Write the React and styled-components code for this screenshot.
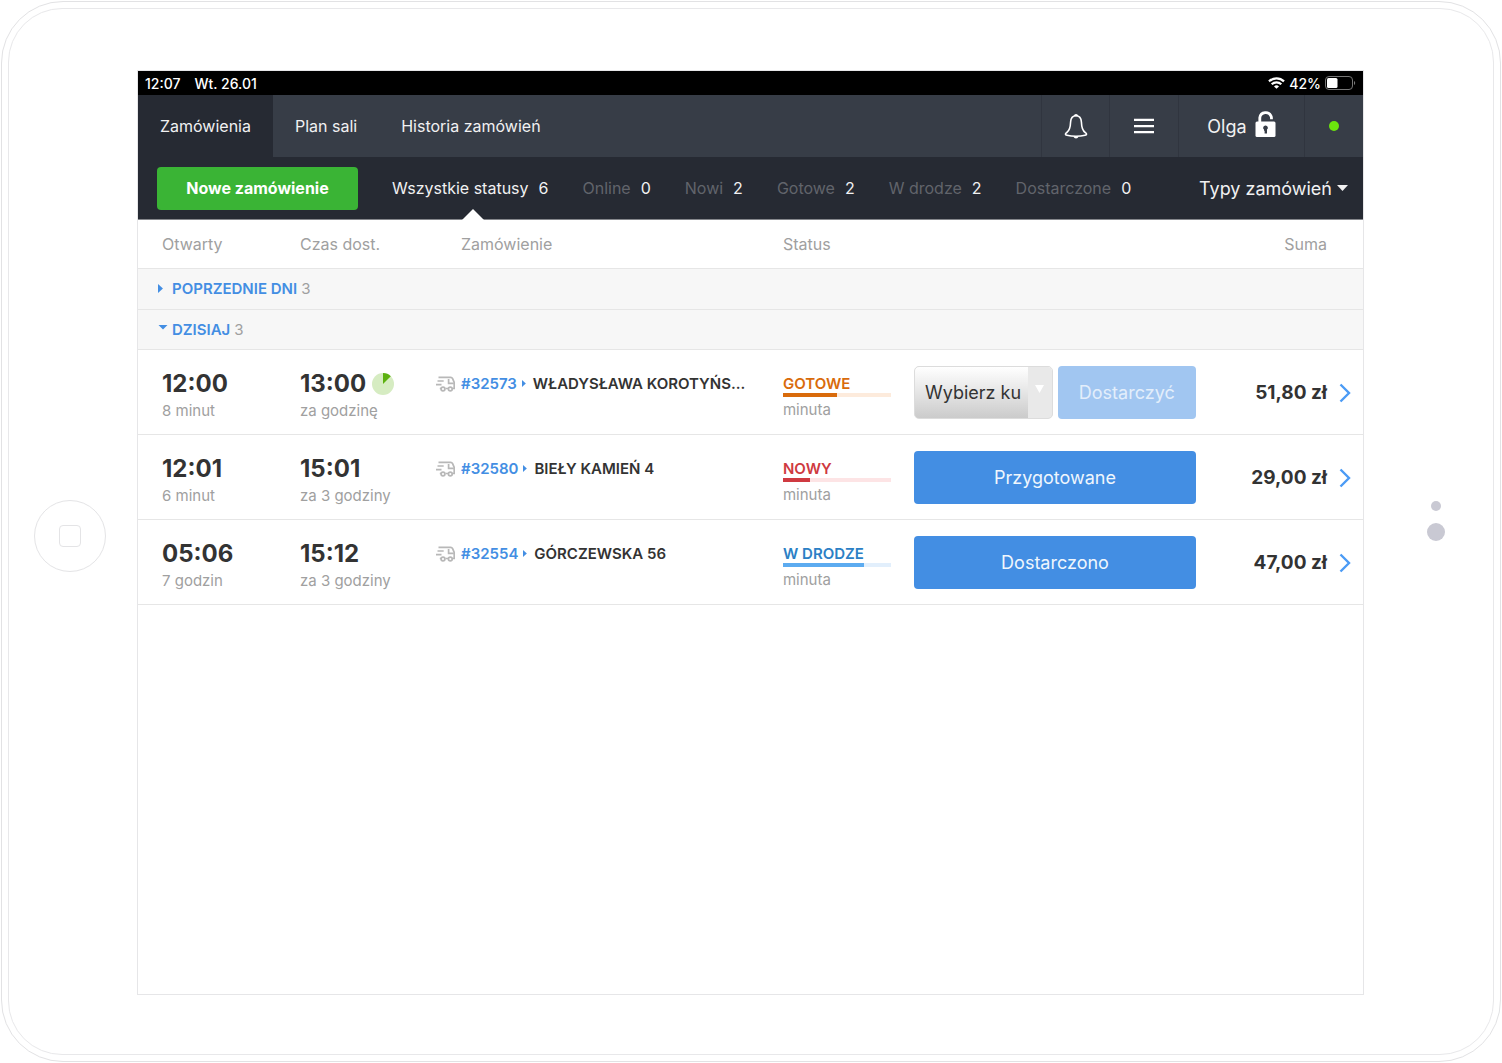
import React, { useState } from 'react';
import styled, { createGlobalStyle } from 'styled-components';

const GlobalStyle = createGlobalStyle`
  *, *::before, *::after {
    box-sizing: border-box;
  }
  body {
    margin: 0;
    background: #fff;
    color: #333;
    font-family: Inter, "Liberation Sans", sans-serif;
    font-size: 16px;
  }
  button, select {
    font: inherit;
    color: inherit;
    cursor: pointer;
  }
  button {
    margin: 0;
    padding: 0;
    border: 0;
    background: none;
  }
`;

const Page = styled.div`
  display: flex;
  min-height: 100vh;
  padding: 1px;
`;

const Device = styled.div`
  flex: 1;
  display: flex;
  padding: 6px;
  border: 1px solid #e2e2e4;
  border-radius: 62px;
`;

const Bezel = styled.div`
  flex: 1;
  display: grid;
  grid-template-columns: 128px minmax(0, 1fr) 129px;
  align-items: center;
  padding: 61px 0 59px;
  border: 1px solid #e8e8ea;
  border-radius: 54px;
`;

const HomeButton = styled.div`
  display: grid;
  place-items: center;
  width: 72px;
  height: 72px;
  margin: 6px 0 0 25px;
  border: 1px solid #e4e4e6;
  border-radius: 50%;

  &::before {
    content: '';
    width: 22px;
    height: 22px;
    border: 1px solid #e4e4e6;
    border-radius: 4px;
  }
`;

const Camera = styled.div`
  display: flex;
  flex-direction: column;
  align-items: center;
  gap: 12px;
  padding: 0 0 24px 14px;
`;

const Lens = styled.span`
  width: ${({ $size }) => $size}px;
  height: ${({ $size }) => $size}px;
  border-radius: 50%;
  background: #c9c9d3;
`;

const Screen = styled.main`
  align-self: stretch;
  border: 1px solid #e6e6e8;
`;

const StatusBar = styled.div`
  display: flex;
  align-items: center;
  gap: 14px;
  height: 24px;
  padding: 0 7px;
  background: #000;
  color: #fff;
  font-size: 14px;
  font-weight: 500;
`;

const StatusIcons = styled.div`
  display: flex;
  align-items: center;
  gap: 4px;
  margin-left: auto;
`;

const TopBar = styled.header`
  display: flex;
  height: 62px;
  background: #373d47;
  color: #f1f1f2;
`;

const Tabs = styled.nav`
  display: flex;
  flex: 1;
`;

const Tab = styled.a`
  display: flex;
  align-items: center;
  padding: 0 22px;
  background: ${({ $active }) => ($active ? '#262a33' : 'transparent')};
  color: inherit;
  text-decoration: none;
`;

const Tools = styled.div`
  display: flex;
`;

const Tool = styled.button`
  display: flex;
  align-items: center;
  justify-content: center;
  gap: 8px;
  width: ${({ $width }) => $width}px;
  border-left: 1px solid #30353f;
  font-size: 18px;
`;

const OnlineDot = styled.span`
  width: 10px;
  height: 10px;
  border-radius: 50%;
  background: #6ce60e;
`;

const FilterBar = styled.div`
  display: flex;
  align-items: center;
  height: 63px;
  padding: 0 15px 0 19px;
  border-bottom: 1px solid #85878c;
  background: #262a33;
  color: #f1f1f2;
`;

const NewOrder = styled.button`
  width: 201px;
  height: 43px;
  border-radius: 4px;
  background: #3ab435;
  color: #fff;
  font-weight: 700;
`;

const Filters = styled.div`
  display: flex;
  align-self: stretch;
  gap: 34px;
  margin-left: 34px;
`;

const Filter = styled.button`
  position: relative;
  display: flex;
  align-items: center;
  gap: 10px;
  color: ${({ $active }) => ($active ? '#f1f1f2' : '#61646b')};

  &::after {
    content: '';
    display: ${({ $active }) => ($active ? 'block' : 'none')};
    position: absolute;
    bottom: -1px;
    left: 70px;
    border: 11px solid transparent;
    border-top: 0;
    border-bottom-color: #fff;
  }
`;

const Count = styled.span`
  color: #f1f1f2;
`;

const TypeMenu = styled.button`
  display: flex;
  align-items: center;
  gap: 5px;
  margin-left: auto;
  font-size: 18px;
`;

const Table = styled.table`
  width: 100%;
  border-collapse: collapse;
  table-layout: fixed;
`;

const Col = styled.col`
  width: ${({ $width }) => ($width ? `${$width}px` : 'auto')};
`;

const Heading = styled.th`
  height: 48px;
  padding: 0 0 0 ${({ $indent }) => $indent || 0}px;
  border-bottom: 1px solid #e6e6e6;
  color: #a0a0a0;
  font-weight: 400;
  text-align: ${({ $align }) => $align || 'left'};
`;

const GroupCell = styled.td`
  height: ${({ $height }) => $height || 41}px;
  padding: 0 20px;
  border-bottom: 1px solid #e6e6e6;
  background: #f7f7f7;
`;

const GroupToggle = styled.button`
  display: flex;
  align-items: center;
  gap: 4px;
  color: #a0a0a0;
  font-size: 15px;

  svg {
    width: 10px;
  }
`;

const GroupName = styled.span`
  color: #438ee3;
  font-weight: 600;
`;

const Cell = styled.td`
  height: 85px;
  padding: 19px 0 0 ${({ $indent }) => $indent || 0}px;
  border-bottom: 1px solid #e6e6e6;
  vertical-align: top;
`;

const MiddleCell = styled(Cell)`
  padding-top: 2px;
  vertical-align: middle;
  text-align: right;
`;

const Time = styled.div`
  display: flex;
  align-items: center;
  gap: 6px;
  color: #333;
  font-size: 24px;
  font-weight: 700;
  line-height: 30px;
`;

const Muted = styled.div`
  color: #a0a0a0;
  font-size: 15px;
  line-height: 24px;
`;

const Order = styled.div`
  display: flex;
  align-items: center;
  gap: 6px;
  height: 30px;
  font-size: 15px;
  font-weight: 600;

  svg {
    flex: none;
  }
`;

const OrderLink = styled.a`
  display: flex;
  align-items: center;
  gap: 5px;
  color: #438ee3;
  text-decoration: none;
`;

const Address = styled.span`
  white-space: nowrap;
`;

const StatusName = styled.div`
  height: 24px;
  color: ${({ $color }) => $color};
  font-size: 15px;
  font-weight: 600;
  line-height: 30px;
`;

const Track = styled.div`
  width: 108px;
  height: 4px;
  margin-bottom: 1px;
  background: ${({ $color }) => $color};
`;

const Bar = styled.div`
  height: 100%;
  background: ${({ $color }) => $color};
`;

const Actions = styled.div`
  display: flex;
  gap: 5px;
`;

const Action = styled.button`
  flex: 1;
  height: 53px;
  border-radius: 4px;
  background: ${({ disabled }) => (disabled ? '#a1c6f1' : '#438ee3')};
  color: ${({ disabled }) => (disabled ? '#e3eefb' : '#eff6fd')};
  font-size: 18px;
`;

const SelectBox = styled.div`
  position: relative;
  flex: 1;
`;

const CourierSelect = styled.select`
  width: 100%;
  height: 53px;
  padding: 0 26px 0 10px;
  border: 1px solid #dcdcdc;
  border-radius: 5px;
  appearance: none;
  background: linear-gradient(#fff, #cbcbcb);
  color: #333;
  font-size: 18px;
`;

const SelectArrow = styled.span`
  position: absolute;
  top: 1px;
  right: 1px;
  bottom: 1px;
  display: flex;
  justify-content: center;
  width: 24px;
  padding-top: 18px;
  border-radius: 0 4px 4px 0;
  background: #e9e9e9;
  pointer-events: none;
`;

const Sum = styled.span`
  font-size: 19px;
  font-weight: 700;
`;

const OpenOrder = styled.button`
  display: block;
  margin: 0 12px 0 auto;

  svg {
    display: block;
  }
`;

const WifiIcon = () => (
  <svg width="17" height="12" viewBox="0 0 17 12" fill="none" stroke="#fff" strokeWidth="2.2">
    <path d="M1 4.4a10.7 10.7 0 0 1 15 0" />
    <path d="M3.7 7.3a6.9 6.9 0 0 1 9.6 0" />
    <path d="M8.5 11.8 6 9.4a3.6 3.6 0 0 1 5 0z" fill="#fff" stroke="none" />
  </svg>
);

const BatteryIcon = () => (
  <svg width="31" height="14" viewBox="0 0 31 14">
    <rect x="0.5" y="0.5" width="27" height="13" rx="3.5" fill="none" stroke="#777" />
    <rect x="2" y="2" width="10.5" height="10" rx="1.5" fill="#fff" />
    <path d="M29 5v4c1.6-.6 1.6-3.4 0-4z" fill="#777" />
  </svg>
);

const BellIcon = () => (
  <svg width="24" height="26" viewBox="0 0 24 26" fill="none" stroke="#fff" strokeWidth="1.6">
    <path d="M12 2.700C8.200 2.700 6.800 5.300 6.600 9c-.2 5.200-.9 8.600-3.800 10.500-1.900 1.200-1.800 2.300.2 2.800 2.600.6 5.700.9 9 .9s6.400-.3 9-.9c2-.5 2.100-1.600.2-2.800-2.900-1.900-3.600-5.300-3.800-10.500-.2-3.700-1.600-6.300-5.400-6.300z" />
    <path d="M9.900 3.200C9.900.2 14.100.2 14.100 3.200z" fill="#fff" stroke="none" />
    <path d="M9.500 23.200h5c-.5 3-4.500 3-5 0z" fill="#fff" stroke="none" />
  </svg>
);

const MenuIcon = () => (
  <svg width="20" height="16" viewBox="0 0 20 16" fill="#fff">
    <path d="M0 .8h20V3H0zM0 7h20v2.200H0zM0 13h20v2.200H0z" />
  </svg>
);

const UnlockIcon = () => (
  <svg width="21" height="32" viewBox="0 0 21 32">
    <path d="M4.800 13V7.700a5.900 5.900 0 0 1 11.400-1.200c.3.800.3 1.600.3 2.700" fill="none" stroke="#fff" strokeWidth="2.8" />
    <rect x="0.5" y="11.500" width="20" height="15.5" rx="1.5" fill="#fff" />
    <path d="M10.500 15.500a2.300 2.300 0 0 1 1.500 4.100v3.800H9.600v-2.600H9v-1.200a2.300 2.300 0 0 1 1.500-4.100z" fill="#373d47" />
  </svg>
);

const CaretIcon = ({ width = 11, height = 6, color = 'currentColor' }) => (
  <svg width={width} height={height} viewBox="0 0 10 6" preserveAspectRatio="none" fill={color}>
    <path d="M0 0h10L5 6z" />
  </svg>
);

const OpenCaretIcon = () => (
  <svg width="10" height="10" viewBox="0 0 10 10" fill="#438ee3">
    <path d="M.5 1h9L5 5.500z" />
  </svg>
);

const RightCaretIcon = ({ size = 9 }) => (
  <svg width={size * 0.7} height={size} viewBox="0 0 6 10" preserveAspectRatio="xMinYMid" fill="#438ee3">
    <path d="M0 0v10l5.500-5z" />
  </svg>
);

const PieIcon = () => (
  <svg width="22" height="22" viewBox="0 0 22 22">
    <circle cx="11" cy="11" r="11" fill="#d6ecc2" />
    <path d="M11 11V0a11 11 0 0 1 7.800 3.200z" fill="#5cb110" />
  </svg>
);

const TruckIcon = () => (
  <svg width="19" height="16" viewBox="0 0 19 16" fill="none" stroke="#b8b8b8" strokeWidth="1.7">
    <path d="M2.500 1.300h12.300c.8 0 1.300.4 1.700 1.100l1.700 3.900v6.200h-1.700M12 12.500H9.500M5 12.500H3.800M1.500 5h6.200M0 8.700h5.500" />
    <path d="M12.600 3v4.300h5.200" />
    <circle cx="7" cy="13" r="1.900" />
    <circle cx="14.300" cy="13" r="1.900" />
  </svg>
);

const ChevronIcon = () => (
  <svg width="12" height="20" viewBox="0 0 12 20" fill="none" stroke="#4b9bf5" strokeWidth="2.4">
    <path d="M1.500 1.500 10 10l-8.500 8.500" />
  </svg>
);

const filters = [
  { name: 'Wszystkie statusy', count: 6 },
  { name: 'Online', count: 0 },
  { name: 'Nowi', count: 2 },
  { name: 'Gotowe', count: 2 },
  { name: 'W drodze', count: 2 },
  { name: 'Dostarczone', count: 0 },
];

const statuses = {
  ready: { name: 'GOTOWE', color: '#d96b0b', track: '#fdebdc', progress: 50 },
  fresh: { name: 'NOWY', color: '#cf3a41', track: '#fde4e5', progress: 25 },
  onWay: { name: 'W DRODZE', color: '#2b80c5', bar: '#5cabf0', track: '#e2effc', progress: 75 },
};

const orders = [
  {
    id: '#32573', opened: '12:00', ago: '8 minut', due: '13:00', left: 'za godzinę', pie: true, address: 'WŁADYSŁAWA KOROTYŃS...', status: 'ready', sum: '51,80 zł',
  },
  {
    id: '#32580', opened: '12:01', ago: '6 minut', due: '15:01', left: 'za 3 godziny', address: 'BIEŁY KAMIEŃ 4', status: 'fresh', action: 'Przygotowane', sum: '29,00 zł',
  },
  {
    id: '#32554', opened: '05:06', ago: '7 godzin', due: '15:12', left: 'za 3 godziny', address: 'GÓRCZEWSKA 56', status: 'onWay', action: 'Dostarczono', sum: '47,00 zł',
  },
];

const OrderRow = ({ order }) => {
  const status = statuses[order.status];
  return (
    <tr>
      <Cell $indent={24}>
        <Time>{order.opened}</Time>
        <Muted>{order.ago}</Muted>
      </Cell>
      <Cell>
        <Time>
          {order.due}
          {order.pie && <PieIcon />}
        </Time>
        <Muted>{order.left}</Muted>
      </Cell>
      <Cell>
        <Order>
          <TruckIcon />
          <OrderLink href={order.id}>
            {order.id}
            <RightCaretIcon size={7} />
          </OrderLink>
          <Address>{order.address}</Address>
        </Order>
      </Cell>
      <Cell>
        <StatusName $color={status.color}>{status.name}</StatusName>
        <Track $color={status.track}>
          <Bar $color={status.bar || status.color} style={{ width: `${status.progress}%` }} />
        </Track>
        <Muted>minuta</Muted>
      </Cell>
      <MiddleCell>
        <Actions>
          {order.action ? (
            <Action type="button">{order.action}</Action>
          ) : (
            <>
              <SelectBox>
                <CourierSelect aria-label="Wybierz kuriera">
                  <option>Wybierz ku</option>
                </CourierSelect>
                <SelectArrow>
                  <CaretIcon width={9} height={8} color="#fff" />
                </SelectArrow>
              </SelectBox>
              <Action type="button" disabled>Dostarczyć</Action>
            </>
          )}
        </Actions>
      </MiddleCell>
      <MiddleCell>
        <Sum>{order.sum}</Sum>
      </MiddleCell>
      <MiddleCell>
        <OpenOrder type="button" aria-label={order.id}>
          <ChevronIcon />
        </OpenOrder>
      </MiddleCell>
    </tr>
  );
};

const App = () => {
  const [filter, setFilter] = useState('Wszystkie statusy');
  const [open, setOpen] = useState(true);

  return (
    <Page>
      <GlobalStyle />
      <Device>
        <Bezel>
          <HomeButton />
          <Screen>
            <StatusBar>
              <span>12:07</span>
              <span>Wt. 26.01</span>
              <StatusIcons>
                <WifiIcon />
                <span>42%</span>
                <BatteryIcon />
              </StatusIcons>
            </StatusBar>
            <TopBar>
              <Tabs>
                <Tab href="#zamowienia" $active>Zamówienia</Tab>
                <Tab href="#plan">Plan sali</Tab>
                <Tab href="#historia">Historia zamówień</Tab>
              </Tabs>
              <Tools>
                <Tool type="button" $width={68} aria-label="Powiadomienia"><BellIcon /></Tool>
                <Tool type="button" $width={69} aria-label="Menu"><MenuIcon /></Tool>
                <Tool type="button" $width={126}>
                  Olga
                  <UnlockIcon />
                </Tool>
                <Tool type="button" $width={59} aria-label="Online"><OnlineDot /></Tool>
              </Tools>
            </TopBar>
            <FilterBar>
              <NewOrder type="button">Nowe zamówienie</NewOrder>
              <Filters>
                {filters.map(({ name, count }) => (
                  <Filter key={name} type="button" $active={name === filter} onClick={() => setFilter(name)}>
                    {name}
                    <Count>{count}</Count>
                  </Filter>
                ))}
              </Filters>
              <TypeMenu type="button">
                Typy zamówień
                <CaretIcon />
              </TypeMenu>
            </FilterBar>
            <Table>
              <colgroup>
                <Col $width={162} />
                <Col $width={136} />
                <Col />
                <Col $width={131} />
                <Col $width={282} />
                <Col $width={131} />
                <Col $width={36} />
              </colgroup>
              <thead>
                <tr>
                  <Heading $indent={24}>Otwarty</Heading>
                  <Heading>Czas dost.</Heading>
                  <Heading $indent={25}>Zamówienie</Heading>
                  <Heading colSpan={2}>Status</Heading>
                  <Heading $align="right">Suma</Heading>
                  <Heading />
                </tr>
              </thead>
              <tbody>
                <tr>
                  <GroupCell colSpan={7}>
                    <GroupToggle type="button">
                      <RightCaretIcon size={9} />
                      <GroupName>POPRZEDNIE DNI</GroupName>
                      3
                    </GroupToggle>
                  </GroupCell>
                </tr>
                <tr>
                  <GroupCell colSpan={7} $height={40}>
                    <GroupToggle type="button" onClick={() => setOpen(!open)}>
                      <OpenCaretIcon />
                      <GroupName>DZISIAJ</GroupName>
                      3
                    </GroupToggle>
                  </GroupCell>
                </tr>
                {open && orders.map((order) => <OrderRow key={order.id} order={order} />)}
              </tbody>
            </Table>
          </Screen>
          <Camera>
            <Lens $size={10} />
            <Lens $size={18} />
          </Camera>
        </Bezel>
      </Device>
    </Page>
  );
};

export default App;
